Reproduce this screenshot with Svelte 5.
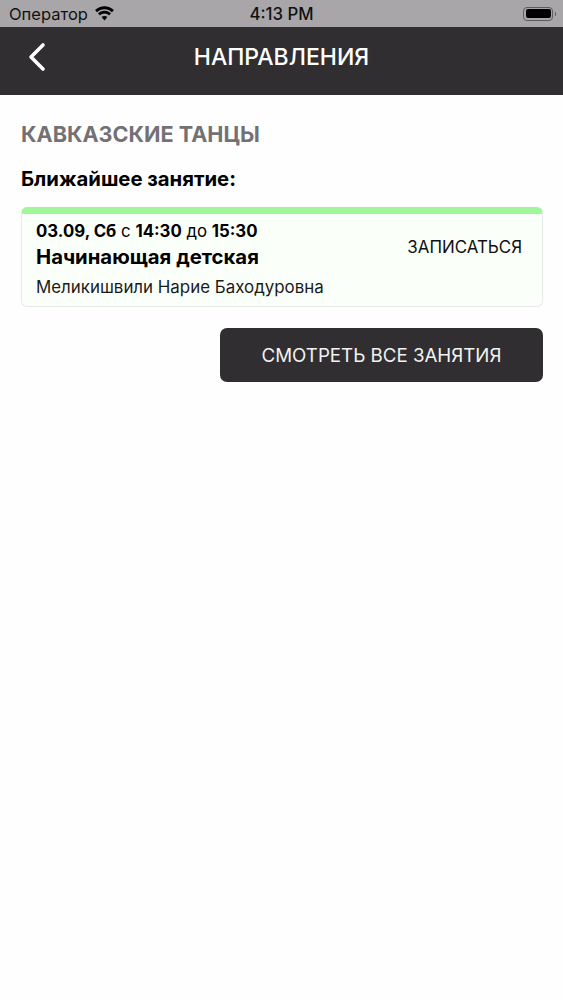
<script>
  let session = {
    date: '03.09, Сб',
    from: '14:30',
    to: '15:30',
    title: 'Начинающая детская',
    teacher: 'Меликишвили Нарие Баходуровна'
  };
</script>

<div class="screen">
  <!-- Status bar -->
  <div class="status">
    <div class="status-left">
      <span>Оператор</span>
      <svg class="wifi" width="21" height="15" viewBox="0 0 21 15" aria-hidden="true">
        <path d="M10.5 3.2c2.9 0 5.5 1.1 7.5 3l1.9-2.1C17.4 1.700 14.100.2 10.500.2S3.600 1.700 1.100 4.100L3 6.200c2-1.900 4.600-3 7.500-3z" fill="#000"/>
        <path d="M10.500 7.600c1.700 0 3.300.7 4.500 1.800l2-2.100c-1.700-1.600-4-2.600-6.500-2.600S5.700 5.700 4 7.300l2 2.100c1.200-1.100 2.800-1.800 4.500-1.800z" fill="#000"/>
        <path d="M10.500 10c-1.100 0-2.100.4-2.900 1.100l2.900 3.400 2.900-3.400c-.8-.7-1.800-1.100-2.900-1.100z" fill="#000"/>
      </svg>
    </div>
    <span class="clock">4:13 PM</span>
    <div class="battery">
      <div class="battery-body"><div class="battery-level"></div></div>
      <div class="battery-cap"></div>
    </div>
  </div>

  <!-- Header -->
  <header class="topbar">
    <button class="back" aria-label="Назад">
      <svg width="20" height="30" viewBox="0 0 20 30" aria-hidden="true">
        <path d="M16 3 L4 15 L16 27" fill="none" stroke="#fff" stroke-width="3.600" stroke-linecap="round" stroke-linejoin="round"/>
      </svg>
    </button>
    <h1>НАПРАВЛЕНИЯ</h1>
  </header>

  <main class="content">
    <h2>КАВКАЗСКИЕ ТАНЦЫ</h2>
    <h3>Ближайшее занятие:</h3>

    <div class="card">
      <div class="card-body">
        <div class="info">
          <div class="time">
            <b>{session.date}</b> с <b>{session.from}</b> до <b>{session.to}</b>
          </div>
          <div class="title">{session.title}</div>
          <div class="teacher">{session.teacher}</div>
        </div>
        <button class="signup">ЗАПИСАТЬСЯ</button>
      </div>
    </div>

    <div class="actions">
      <button class="all">СМОТРЕТЬ ВСЕ ЗАНЯТИЯ</button>
    </div>
  </main>
</div>

<style>
  :global(body) {
    margin: 0;
    background: #fff;
  }

  .screen {
    width: 563px;
    height: 1000px;
    overflow: hidden;
    font-family: Inter, "Liberation Sans", sans-serif;
    color: #000;
    background: #fefefe;
  }

  .status {
    height: 27px;
    background: #a8a6a9;
    display: flex;
    align-items: center;
    justify-content: space-between;
    padding: 0 7px 0 9px;
    position: relative;
    font-size: 16.500px;
    color: #111;
  }

  .status-left {
    display: flex;
    align-items: center;
    gap: 6px;
  }

  .wifi {
    margin-top: -1px;
  }

  .clock {
    position: absolute;
    left: 0;
    right: 0;
    text-align: center;
    font-size: 16.800px;
    font-weight: 500;
    pointer-events: none;
  }

  .battery {
    display: flex;
    align-items: center;
    gap: 1.500px;
  }

  .battery-body {
    width: 30px;
    height: 14px;
    box-sizing: border-box;
    border: 1px solid #5c5b5d;
    border-radius: 4px;
    padding: 1.500px;
  }

  .battery-level {
    height: 100%;
    background: #000;
    border-radius: 2px;
  }

  .battery-cap {
    width: 1.500px;
    height: 4px;
    background: #5c5b5d;
    border-radius: 0 1px 1px 0;
  }

  .topbar {
    height: 68px;
    background: #302e31;
    display: flex;
    align-items: center;
    justify-content: center;
    position: relative;
    padding-bottom: 8px;
    box-sizing: border-box;
  }

  .topbar h1 {
    margin: 0;
    font-size: 23px;
    font-weight: 500;
    color: #fff;
  }

  .back {
    position: absolute;
    left: 27px;
    top: 15px;
    width: 20px;
    height: 30px;
    padding: 0;
    border: none;
    background: none;
  }

  .content {
    padding: 27px 20px 0 21px;
  }

  h2 {
    margin: 0;
    font-size: 21.600px;
    line-height: 25px;
    font-weight: 700;
    color: #737175;
  }

  h3 {
    margin: 20px 0 0;
    font-size: 20.300px;
    line-height: 24px;
    font-weight: 700;
  }

  .card {
    margin-top: 16px;
    height: 100px;
    box-sizing: border-box;
    border: 1px solid #e6e9e6;
    border-top: 7px solid #a0f79b;
    border-radius: 6px;
    background: #fafffa;
  }

  .card-body {
    display: flex;
    align-items: center;
    justify-content: space-between;
    padding: 0 20px 2px 14px;
    height: 100%;
    box-sizing: border-box;
  }

  .time {
    font-size: 16.800px;
    line-height: 20px;
    margin-top: -1px;
  }

  .time b {
    font-weight: 700;
  }

  .title {
    font-size: 20.300px;
    line-height: 24px;
    font-weight: 700;
    margin-top: 4px;
  }

  .teacher {
    font-size: 16.900px;
    line-height: 20px;
    margin-top: 8px;
    color: #1a1a1a;
  }

  .signup {
    font: inherit;
    font-size: 16.900px;
    color: #111;
    background: none;
    border: none;
    padding: 0;
    margin-bottom: 24px;
  }

  .actions {
    display: flex;
    justify-content: flex-end;
    margin-top: 21px;
  }

  .all {
    width: 323px;
    height: 54px;
    border: none;
    border-radius: 7px;
    background: #302e31;
    color: #f2f2f2;
    font: inherit;
    font-size: 18.700px;
  }
</style>
